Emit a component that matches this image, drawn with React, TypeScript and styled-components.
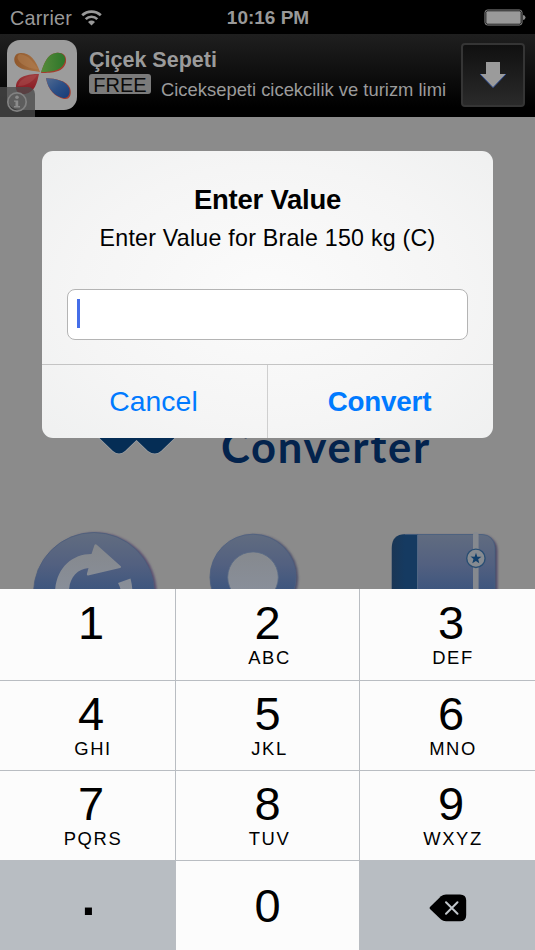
import React from 'react';
import styled, { createGlobalStyle } from 'styled-components';

const GlobalStyle = createGlobalStyle`
  * { box-sizing: border-box; }
  body { margin: 0; background: #8b8b8b; }
  button { border: 0; padding: 0; margin: 0; background: none; font: inherit; color: inherit; }
`;

const Screen = styled.main`
  display: grid;
  grid-template-rows: 34px 83px 472px 361px;
  width: 535px;
  height: 950px;
  overflow: hidden;
  position: relative;
  background: #8b8b8b;
  font-family: 'Liberation Sans', Arial, sans-serif;
  color: #000;
`;

const StatusBar = styled.header`
  display: grid;
  grid-template-columns: 1fr auto 1fr;
  align-items: center;
  padding: 0 9px 0 10px;
  background: #000;
  color: #999;
  font-size: 19px;
  line-height: 34px;
`;
const Carrier = styled.div`
  display: flex;
  align-items: center;
  gap: 9px;
  font-size: 19.8px;
  letter-spacing: 0.25px;
`;
const Clock = styled.div`
  padding-top: 1px;
  font-weight: 700;
`;
const BatterySlot = styled.div`
  display: flex;
  justify-content: flex-end;
`;

const Ad = styled.section`
  position: relative;
  display: flex;
  padding: 6px 10px 0 7px;
  background: linear-gradient(#1f1f1f, #0e0e0e 50%, #000 88%);
  color: #9b9b9b;
`;
const AppIcon = styled.div`
  width: 70px;
  height: 70px;
  flex: none;
  border-radius: 13px;
  background: #9c9c9c;
`;
const InfoTab = styled.div`
  position: absolute;
  left: 0;
  bottom: 0;
  width: 35px;
  height: 30px;
  border-top-right-radius: 7px;
  background: rgba(76, 76, 76, 0.78);
`;
const AdText = styled.div`
  width: 358px;
  margin-left: 11px;
  padding-top: 8px;
  overflow: hidden;
`;
const AdTitle = styled.div`
  font-size: 21.5px;
  font-weight: 700;
  line-height: 25px;
  padding-left: 1px;
`;
const AdLine = styled.div`
  display: flex;
  align-items: flex-start;
  margin-top: 1px;
`;
const FreeBadge = styled.span`
  flex: none;
  width: 62px;
  height: 20px;
  margin: 0 10px 0 1px;
  border-radius: 3px;
  background: #7b7b7b;
  color: #0b0b0b;
  font-size: 20px;
  line-height: 23px;
  text-align: center;
`;
const AdDescription = styled.span`
  flex: none;
  width: 285px;
  overflow: hidden;
  white-space: nowrap;
  font-size: 18.4px;
  line-height: 31px;
`;
const DownloadButton = styled.button`
  width: 64px;
  height: 64px;
  margin: 3px 0 0 auto;
  flex: none;
  display: grid;
  place-items: center;
  border: 2px solid #353535;
  border-radius: 4px;
  background: linear-gradient(#101010, #2a2a2a);
`;

const Content = styled.section`
  overflow: hidden;
  background: #8b8b8b;
  padding-top: 306px;
`;
const Brand = styled.div`
  display: flex;
  height: 60px;
  padding-left: 95px;
`;
const BrandName = styled.div`
  margin: -1px 0 0 42px;
  font-family: Lato, sans-serif;
  font-weight: 700;
  font-size: 43.5px;
  line-height: 48px;
  letter-spacing: 1.7px;
  color: #03234d;
`;
const ShortcutRow = styled.div`
  display: flex;
  margin-top: 46px;
  padding-left: 30px;
  gap: 48px;
  svg:last-child { margin-left: 37px; }
`;

const Alert = styled.div`
  position: absolute;
  left: 42px;
  top: 150.5px;
  width: 451px;
  height: 287.5px;
  padding-top: 31px;
  border-radius: 11px;
  overflow: hidden;
  text-align: center;
  background: radial-gradient(ellipse 70% 75% at 50% 50%, #fbfbfb, #f5f5f5 60%, #eff0f0);
`;
const AlertTitle = styled.h1`
  margin: 0;
  font-size: 27.5px;
  line-height: 35px;
  letter-spacing: -0.25px;
`;
const AlertMessage = styled.p`
  margin: 3px 0 0;
  font-size: 23.2px;
  line-height: 36px;
  letter-spacing: 0.24px;
`;
const Field = styled.div`
  display: flex;
  height: 50.5px;
  margin: 33.5px 25px 24.5px;
  padding: 9px 9px;
  border: 1px solid #b4b4b4;
  border-radius: 8px;
  background: #fff;
`;
const Caret = styled.span`
  width: 3px;
  height: 29px;
  background: #456ee8;
`;
const Actions = styled.div`
  display: grid;
  grid-template-columns: 225px 226px;
  height: 74px;
  border-top: 1px solid #c4c4c4;
`;
const Action = styled.button<{ $strong?: boolean }>`
  padding-right: 2px;
  color: #007aff;
  font-size: ${p => (p.$strong ? 27.8 : 28.3)}px;
  font-weight: ${p => (p.$strong ? 700 : 400)};
  line-height: ${p => (p.$strong ? 74 : 72)}px;
  padding-bottom: ${p => (p.$strong ? 0 : 2)}px;
  letter-spacing: ${p => (p.$strong ? '-0.2px' : '0.1px')};
  border-left: ${p => (p.$strong ? '1px solid #cfcfcf' : '0')};
`;

const Keypad = styled.section`
  display: grid;
  grid-template-columns: 175px 183px 175px;
  grid-template-rows: 91px 89px 89px 89px;
  gap: 1px;
  background: #b9bdc2;
`;
const Key = styled.button<{ $muted?: boolean; $shift?: boolean; $first?: boolean }>`
  display: flex;
  flex-direction: column;
  align-items: center;
  height: 100%;
  padding: ${p => (p.$first ? 7 : 6)}px 0 0 ${p => (p.$shift ? 7 : 0)}px;
  background: ${p => (p.$muted ? '#b8bdc2' : '#fcfcfc')};
`;
const Digit = styled.span<{ $low?: boolean }>`
  margin-top: ${p => (p.$low ? 12 : 0)}px;
  font-size: 47px;
  line-height: 54px;
`;
const Letters = styled.span`
  margin-top: -3px;
  padding-left: 4px;
  font-size: 18.4px;
  line-height: 22px;
  letter-spacing: 1.6px;
`;
const DecimalPoint = styled(Digit)`
  margin: 4px 5px 0 0;
  font-size: 50px;
  font-weight: 700;
`;
const DeleteSlot = styled.span`
  margin: 27px 7px 0 0;
`;

const keys: [string, string][] = [
  ['1', ''], ['2', 'ABC'], ['3', 'DEF'],
  ['4', 'GHI'], ['5', 'JKL'], ['6', 'MNO'],
  ['7', 'PQRS'], ['8', 'TUV'], ['9', 'WXYZ'],
];

const WifiIcon = () => (
  <svg width="21" height="16" viewBox="0 0 21 16" fill="none" stroke="#999" strokeWidth="2.7">
    <path d="M1.2 5.3A13.4 13.4 0 0 1 19.8 5.3" />
    <path d="M4.7 9.1A8.3 8.3 0 0 1 16.3 9.1" />
    <path d="M7 12Q10.5 9.2 14 12L10.5 15.5Z" fill="#999" stroke="none" />
  </svg>
);

const BatteryIcon = () => (
  <svg width="42" height="17" viewBox="0 0 42 17">
    <rect x="1" y="1" width="37" height="15" rx="2.5" fill="none" stroke="#8b8b8b" strokeWidth="1" />
    <rect x="2.300" y="2.300" width="34.400" height="12.400" rx="1" fill="#999" />
    <path d="M39 6Q41.5 6.3 41.5 8.5T39 11Z" fill="#8b8b8b" />
  </svg>
);

const PetalsIcon = () => (
  <svg width="70" height="70" viewBox="0 0 70 70">
    <defs>
      <linearGradient id="orange"><stop stopColor="#8f572b" /><stop offset="1" stopColor="#a87345" /></linearGradient>
      <linearGradient id="green"><stop stopColor="#568a3a" /><stop offset="1" stopColor="#2d762a" /></linearGradient>
      <linearGradient id="red" x2="0" y2="1"><stop stopColor="#9c3b3d" /><stop offset="1" stopColor="#85131e" /></linearGradient>
      <linearGradient id="blue" y2="1"><stop stopColor="#526b91" /><stop offset=".5" stopColor="#2b4f86" /><stop offset="1" stopColor="#173c77" /></linearGradient>
    </defs>
    <path d="M33 32C29 20 23 13 14 13C8 13 6 18 8 23C11 30 22 30 33 32Z" fill="url(#orange)" />
    <path d="M13 14C22 15 27 23 31 29C25 29 19 27 15 24C10 20 9 16 13 14Z" fill="#b17e50" opacity=".55" />
    <path d="M34 33C46 33 57 32 59 22C60 15 55 12 49 13C40 14 37 24 34 33Z" fill="#a33d2c" />
    <path d="M34 32C46 32 56 30 58 21C59 15 54 12 49 13C40 14 37 24 34 32Z" fill="url(#green)" />
    <path d="M32 34C21 34 10 36 9 46C8 51 12 55 18 54C28 52 30 43 32 34Z" fill="url(#red)" />
    <path d="M30 35C20 35 12 40 11 46C20 46 27 41 30 35Z" fill="#ac5253" opacity=".45" />
    <path d="M39 38C41 50 48 57 57 59C63 60 65 54 63 48C59 40 49 39 39 38Z" fill="#a33e31" />
    <path d="M39 38C41 50 48 56 56 58C61 59 64 53 62 48C58 40 49 39 39 38Z" fill="url(#blue)" />
  </svg>
);

const InfoIcon = () => (
  <svg width="35" height="30" viewBox="0 0 35 30">
    <circle cx="17" cy="15" r="9.2" fill="none" stroke="#828282" strokeWidth="1.7" />
    <circle cx="17" cy="10.3" r="1.8" fill="#8b8b8b" />
    <path d="M14 13.4H18.2V19H20V20.5H14V19H15.5V14.8H14Z" fill="#8b8b8b" />
  </svg>
);

const DownloadIcon = () => (
  <svg width="28" height="28" viewBox="0 0 28 28">
    <path d="M7 1H21V13H27L14 26.6L1 13H7Z" fill="#9b9b9b" />
    <path d="M1 13L14 26.6L27 13" fill="none" stroke="#35549b" strokeWidth="1" />
  </svg>
);

const BrandMark = () => (
  <svg width="84" height="34" viewBox="95 423 84 34">
    <path d="M86 425L113 451Q119 456 125 451L136.5 440L148 451Q155 456 161 451L188 425Z"
      fill="#052d55" stroke="#a0a3a6" strokeWidth="1.4" paintOrder="stroke" />
  </svg>
);

const ConvertIcon = () => (
  <svg width="130" height="70" viewBox="30 529 130 70">
    <defs>
      <linearGradient id="tint" x1="0" y1="532" x2="0" y2="592" gradientUnits="userSpaceOnUse">
        <stop stopColor="#626d80" /><stop offset=".55" stopColor="#526080" /><stop offset="1" stopColor="#3c557e" />
      </linearGradient>
      <linearGradient id="pale" x1="0" y1="545" x2="0" y2="592" gradientUnits="userSpaceOnUse">
        <stop stopColor="#85888c" /><stop offset="1" stopColor="#898f9a" />
      </linearGradient>
      <filter id="soft" x="-20%" y="-20%" width="140%" height="140%"><feGaussianBlur stdDeviation="1.3" /></filter>
    </defs>
    <circle cx="95.8" cy="593.5" r="61" fill="#594e70" filter="url(#soft)" />
    <circle cx="94" cy="593" r="60.5" fill="url(#tint)" stroke="#4b5d7b" strokeWidth=".8" />
    <path d="M55 592C56 568 72 554 91.5 554L94.5 545Q95.5 543.5 97 545L120.5 566Q122 567.5 120 568L88 575.5Q86.500 575.500 87 573.500L88.500 568C77 569 69 578 69 592Z" fill="url(#pale)" />
    <path d="M118 583L130.500 578.500Q132.500 586 132.500 594H121Q121 588 118 583Z" fill="url(#pale)" />
  </svg>
);

const RingIcon = () => (
  <svg width="94" height="70" viewBox="208 529 94 70">
    <circle cx="254.800" cy="578" r="43.500" fill="#4e506c" filter="url(#soft)" />
    <circle cx="253" cy="577.200" r="43" fill="url(#tint)" stroke="#4d6080" strokeWidth=".8" />
    <circle cx="253" cy="577.200" r="25.300" fill="url(#pale)" stroke="#586985" strokeWidth=".8" />
  </svg>
);

const NotebookIcon = () => (
  <svg width="115" height="70" viewBox="387 529 115 70">
    <defs><linearGradient id="edge"><stop stopColor="#1a3655" /><stop offset=".5" stopColor="#153a61" /></linearGradient></defs>
    <rect x="394" y="535" width="103.500" height="90" rx="15" fill="#4e4868" filter="url(#soft)" />
    <rect x="391.800" y="534.300" width="103.200" height="90" rx="14" fill="url(#tint)" />
    <path d="M418 534.300H405Q391.800 534.300 391.800 548V625H418Z" fill="url(#edge)" />
    <path d="M417.600 535V600" stroke="#5d718b" strokeWidth=".9" />
    <path d="M405 534.500H482Q494 535 495 548V600" fill="none" stroke="#46607f" strokeWidth=".8" />
    <path d="M473 600V535Q473 532 475.800 532T478.600 535V600Z" fill="#85898f" />
    <circle cx="475.900" cy="558.300" r="9.200" fill="#868b91" stroke="#294e73" strokeWidth="1.400" />
    <path d="M476 552.800L477.300 556.700H481.500L478.200 559.300L479.300 563.300L475.900 560.900L472.300 563.200L473.500 559.100L470.500 556.600L474.600 556.700Z" fill="#113f6b" />
  </svg>
);

const DeleteIcon = () => (
  <svg width="38" height="28" viewBox="0 0 38 28">
    <path d="M1 13L12 2.300Q14 .5 17 .5H31Q37.200 .5 37.200 6.500V21Q37.200 27.300 31 27.300H17Q14 27.300 12 25.500L1 15Q0 14 1 13Z" fill="#000" />
    <path d="M17 8.200L28.500 19.700M28.500 8.200L17 19.700" stroke="#c0c5ca" strokeWidth="2" strokeLinecap="round" />
  </svg>
);

export default function App() {
  return (
    <>
      <GlobalStyle />
      <Screen>
        <StatusBar>
          <Carrier>Carrier<WifiIcon /></Carrier>
          <Clock>10:16 PM</Clock>
          <BatterySlot><BatteryIcon /></BatterySlot>
        </StatusBar>
        <Ad>
          <AppIcon><PetalsIcon /></AppIcon>
          <InfoTab><InfoIcon /></InfoTab>
          <AdText>
            <AdTitle>Çiçek Sepeti</AdTitle>
            <AdLine>
              <FreeBadge>FREE</FreeBadge>
              <AdDescription>Ciceksepeti cicekcilik ve turizm limi</AdDescription>
            </AdLine>
          </AdText>
          <DownloadButton aria-label="Download"><DownloadIcon /></DownloadButton>
        </Ad>
        <Content>
          <Brand><BrandMark /><BrandName>Converter</BrandName></Brand>
          <ShortcutRow><ConvertIcon /><RingIcon /><NotebookIcon /></ShortcutRow>
        </Content>
        <Keypad>
          {keys.map(([digit, letters], i) => (
            <Key key={digit} $shift={i % 3 !== 1} $first={i < 3}>
              <Digit>{digit}</Digit>
              {letters && <Letters>{letters}</Letters>}
            </Key>
          ))}
          <Key $muted $shift><DecimalPoint>.</DecimalPoint></Key>
          <Key><Digit $low>0</Digit></Key>
          <Key $muted $shift aria-label="Delete"><DeleteSlot><DeleteIcon /></DeleteSlot></Key>
        </Keypad>
        <Alert role="dialog">
          <AlertTitle>Enter Value</AlertTitle>
          <AlertMessage>Enter Value for Brale 150 kg (C)</AlertMessage>
          <Field><Caret /></Field>
          <Actions>
            <Action>Cancel</Action>
            <Action $strong>Convert</Action>
          </Actions>
        </Alert>
      </Screen>
    </>
  );
}
